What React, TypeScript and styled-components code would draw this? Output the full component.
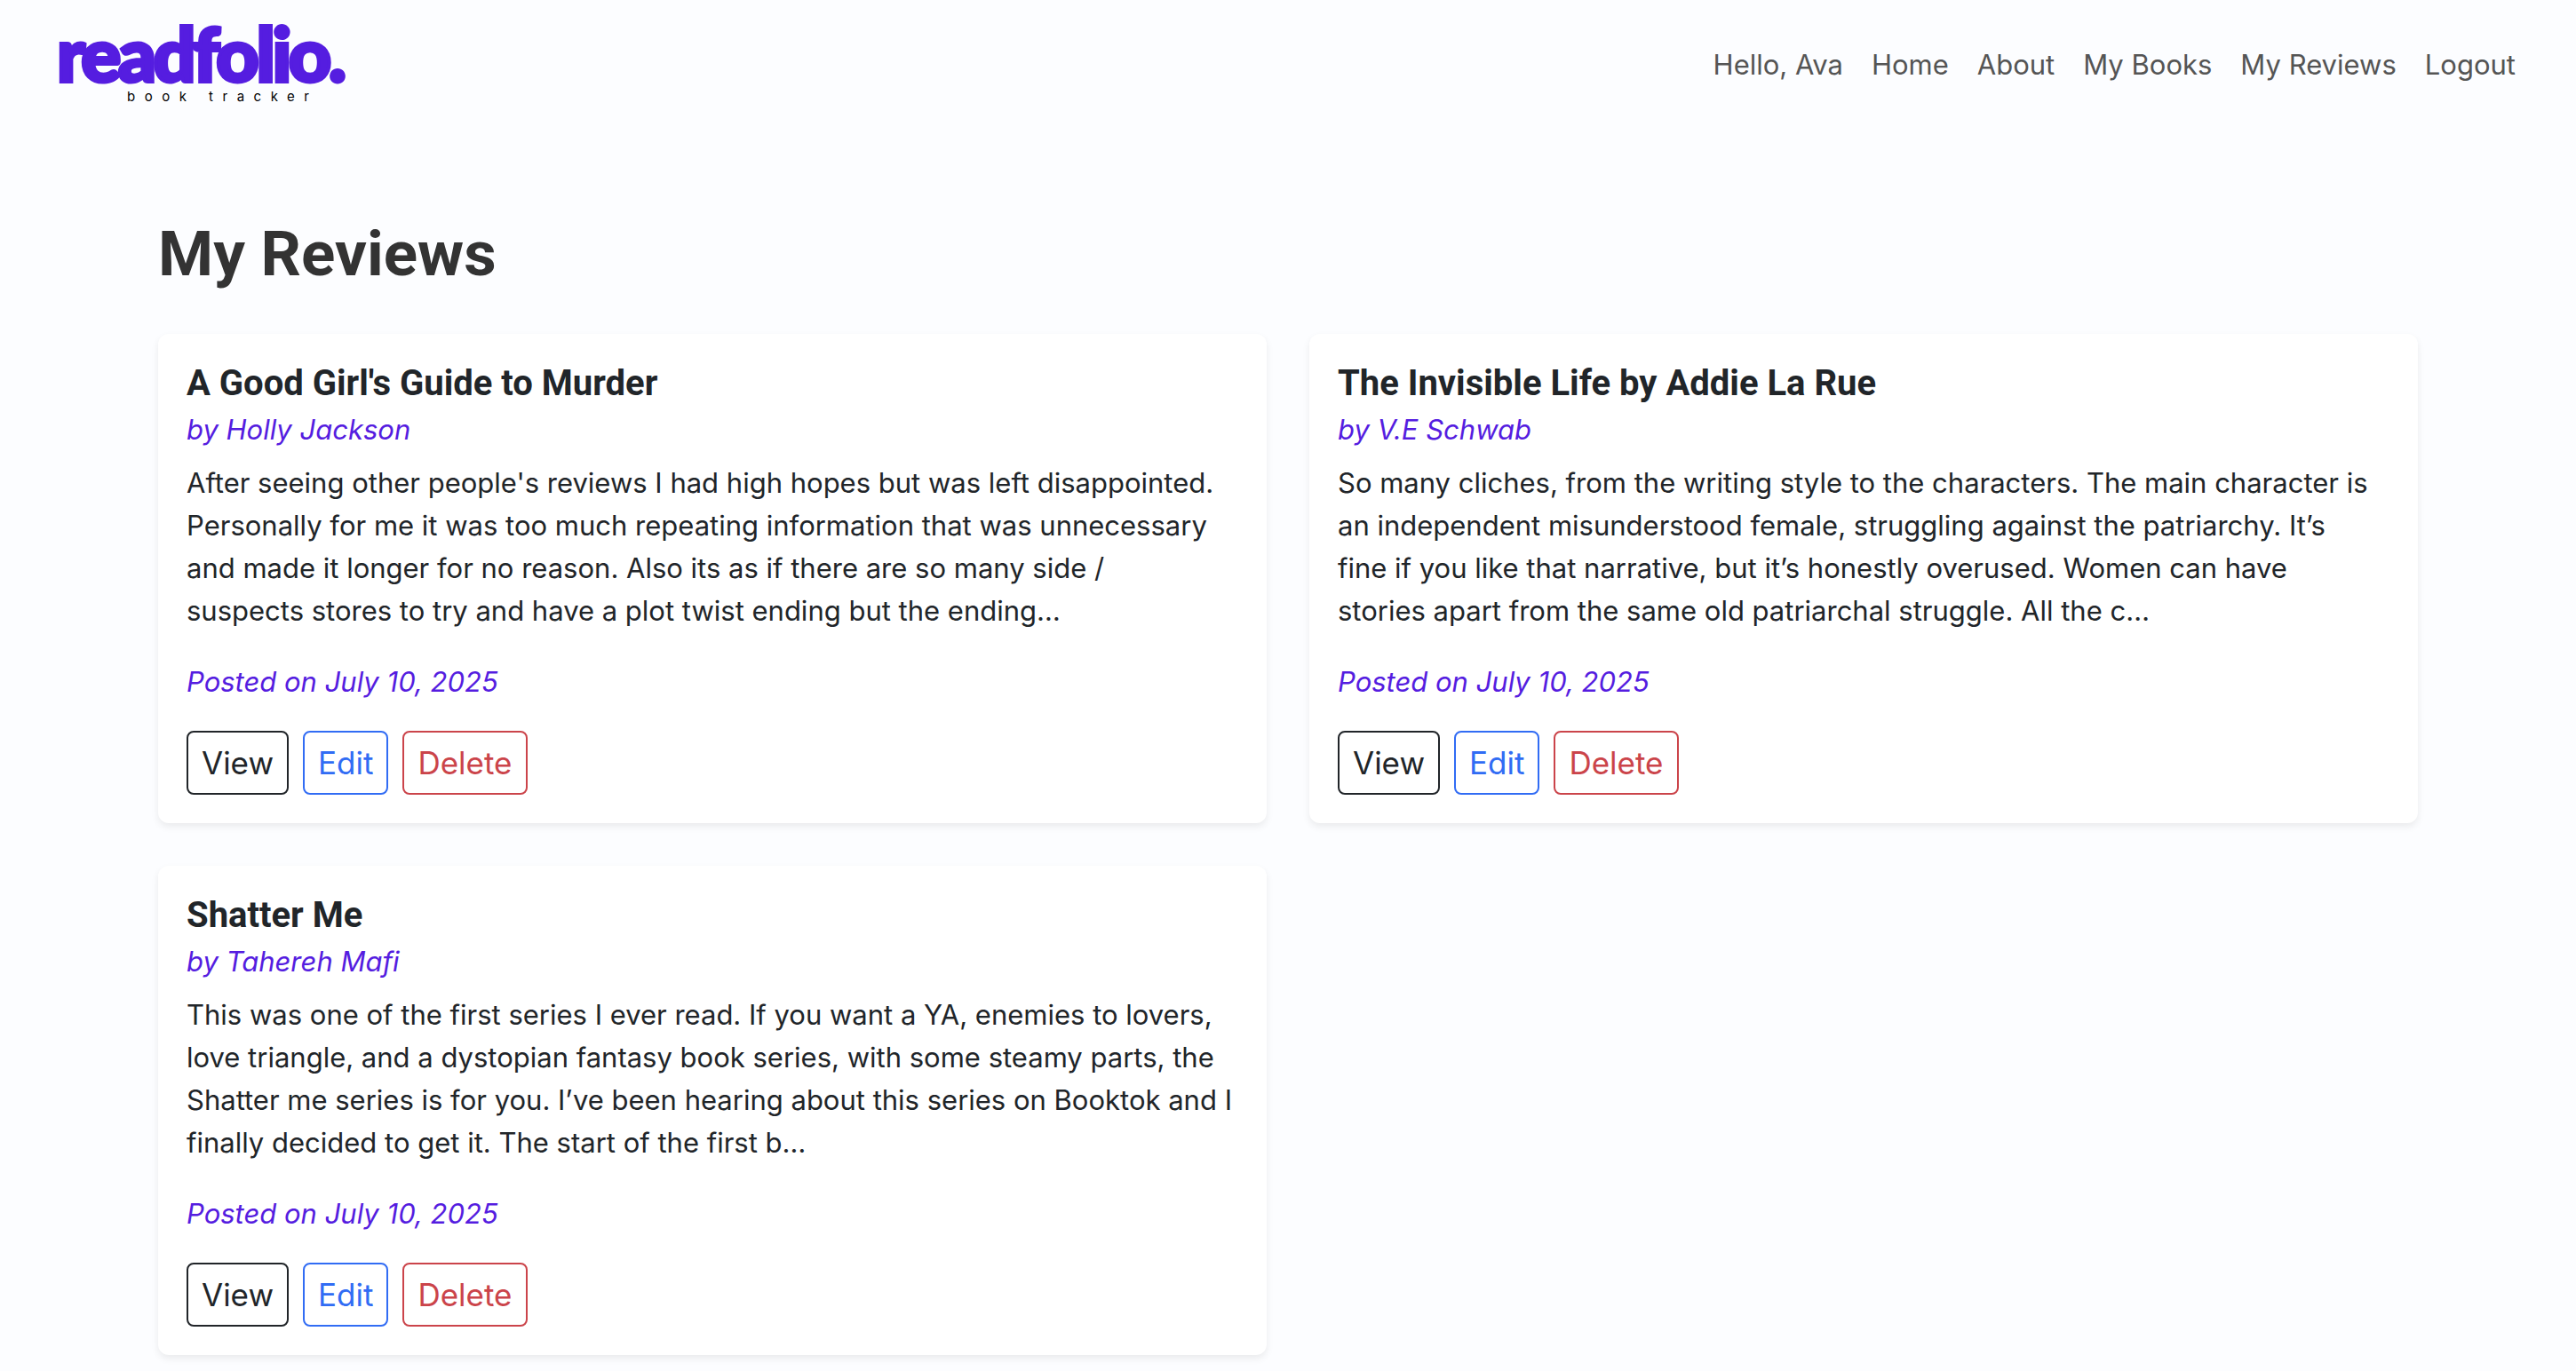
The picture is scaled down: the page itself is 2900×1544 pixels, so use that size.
import React from "react";
import styled, { createGlobalStyle } from "styled-components";

const colors = {
  page: "#fcfdff",
  ink: "#212529",
  heading: "#333333",
  nav: "#555555",
  brand: "#551de0",
  blue: "#316cf4",
  red: "#cb444a",
};

const GlobalStyle = createGlobalStyle`
  *, *::before, *::after {
    box-sizing: border-box;
  }

  body {
    margin: 0;
    background: ${colors.page};
    color: ${colors.ink};
    font-family: Inter, "Open Sans", sans-serif;
    font-size: 31px;
    line-height: 48px;
  }
`;

const Header = styled.header`
  display: flex;
  align-items: center;
  justify-content: space-between;
  gap: 32px;
  min-height: 146px;
  padding: 0 68px 0 64px;
`;

const Brand = styled.a`
  display: flex;
  flex-direction: column;
  padding-bottom: 8px;
  color: ${colors.brand};
  text-decoration: none;
`;

const Wordmark = styled.span`
  font-family: Lato, sans-serif;
  font-size: 84px;
  font-weight: 900;
  line-height: 80px;
  letter-spacing: -0.04em;
  -webkit-text-stroke: 4px currentColor;
`;

const Tagline = styled.span`
  padding-left: 79px;
  color: #000000;
  font-size: 15px;
  line-height: 18px;
  letter-spacing: 0.7em;
`;

const Nav = styled.nav`
  display: flex;
  flex-wrap: wrap;
  gap: 32px;
  color: ${colors.nav};
`;

const NavLink = styled.a`
  color: inherit;
  text-decoration: none;
`;

const Main = styled.main`
  max-width: 2640px;
  margin: 0 auto;
  padding: 96px 48px 16px;
`;

const PageTitle = styled.h1`
  margin: 0 0 46px;
  color: ${colors.heading};
  font-family: Roboto, sans-serif;
  font-size: 71px;
  font-weight: 700;
  line-height: 88px;
`;

const ReviewGrid = styled.div`
  display: grid;
  grid-template-columns: repeat(2, minmax(0, 1fr));
  gap: 48px;
`;

const Card = styled.article`
  padding: 32px;
  border-radius: 12px;
  background: #ffffff;
  box-shadow: 0 4px 8px rgba(0, 0, 0, 0.075);
`;

const BookTitle = styled.h2`
  margin: 0 0 8px;
  font-family: Roboto, sans-serif;
  font-size: 40px;
  font-weight: 700;
  line-height: 48px;
`;

const Author = styled.p`
  margin: 0 0 16px;
  color: ${colors.brand};
  font-style: italic;
  line-height: 40px;
`;

const Excerpt = styled.p`
  margin: 0 0 32px;
  white-space: pre-line;
`;

const Posted = styled.p`
  margin: 0 0 31px;
  color: ${colors.brand};
  font-style: italic;
`;

const Actions = styled.div`
  display: flex;
  gap: 16px;
`;

const ActionButton = styled.button<{ $color: string }>`
  padding: 8px 15px;
  border: 2px solid ${(p) => p.$color};
  border-radius: 8px;
  background: transparent;
  color: ${(p) => p.$color};
  font-family: inherit;
  font-size: 35px;
  line-height: 52px;
  cursor: pointer;
`;

interface Review {
  title: string;
  author: string;
  excerpt: string;
  posted: string;
}

const reviews: Review[] = [
  {
    title: "A Good Girl's Guide to Murder",
    author: "Holly Jackson",
    excerpt:
      "After seeing other people's reviews I had high hopes but was left disappointed. Personally for me it was too much repeating information that was unnecessary and made it longer for no reason. Also its as if there are so many side /\nsuspects stores to try and have a plot twist ending but the ending…",
    posted: "July 10, 2025",
  },
  {
    title: "The Invisible Life by Addie La Rue",
    author: "V.E Schwab",
    excerpt:
      "So many cliches, from the writing style to the characters. The main character is an independent misunderstood female, struggling against the patriarchy. It’s\nfine if you like that narrative, but it’s honestly overused. Women can have\nstories apart from the same old patriarchal struggle. All the c…",
    posted: "July 10, 2025",
  },
  {
    title: "Shatter Me",
    author: "Tahereh Mafi",
    excerpt:
      "This was one of the first series I ever read. If you want a YA, enemies to lovers, love triangle, and a dystopian fantasy book series, with some steamy parts, the Shatter me series is for you. I’ve been hearing about this series on Booktok and I finally decided to get it. The start of the first b…",
    posted: "July 10, 2025",
  },
];

const links = ["Home", "About", "My Books", "My Reviews", "Logout"];

function ReviewCard({ review }: { review: Review }) {
  return (
    <Card>
      <BookTitle>{review.title}</BookTitle>
      <Author>by {review.author}</Author>
      <Excerpt>{review.excerpt}</Excerpt>
      <Posted>Posted on {review.posted}</Posted>
      <Actions>
        <ActionButton type="button" $color={colors.ink}>View</ActionButton>
        <ActionButton type="button" $color={colors.blue}>Edit</ActionButton>
        <ActionButton type="button" $color={colors.red}>Delete</ActionButton>
      </Actions>
    </Card>
  );
}

export default function App() {
  return (
    <>
      <GlobalStyle />
      <Header>
        <Brand href="#">
          <Wordmark>readfolio.</Wordmark>
          <Tagline>book tracker</Tagline>
        </Brand>
        <Nav>
          <span>Hello, Ava</span>
          {links.map((label) => (
            <NavLink key={label} href="#">{label}</NavLink>
          ))}
        </Nav>
      </Header>
      <Main>
        <PageTitle>My Reviews</PageTitle>
        <ReviewGrid>
          {reviews.map((review) => (
            <ReviewCard key={review.title} review={review} />
          ))}
        </ReviewGrid>
      </Main>
    </>
  );
}
